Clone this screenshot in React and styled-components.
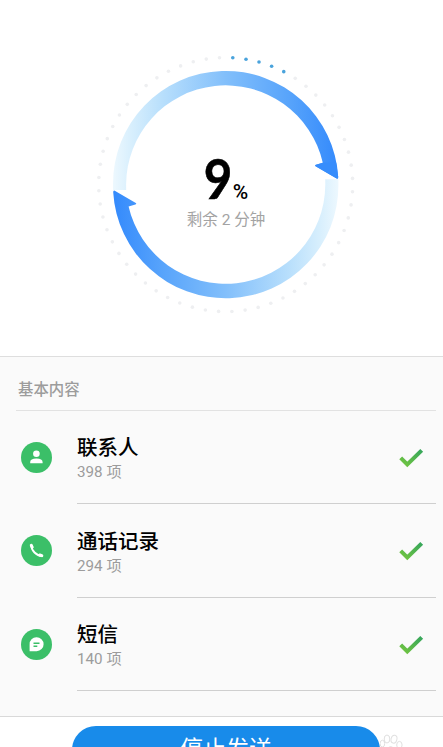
import React from 'react';
import styled, { createGlobalStyle } from 'styled-components';

const GlobalStyle = createGlobalStyle`
  * {
    box-sizing: border-box;
  }
  body {
    margin: 0;
    background: #fff;
    font-family: Roboto, "Noto Sans CJK SC", sans-serif;
  }
`;

const ScScreen = styled.div`
  height: 747px;
  overflow: hidden;
  display: flex;
  flex-direction: column;
  background: #fff;
`;

const ScProgress = styled.section`
  height: 356px;
  flex: none;
  padding: 50px 0 0 91px;
`;

const ScDial = styled.div`
  display: grid;
  width: 270px;
  height: 270px;

  & > * {
    grid-area: 1 / 1;
  }
`;

const ScDialText = styled.div`
  display: flex;
  flex-direction: column;
  align-items: center;
  padding-top: 100px;
`;

const ScPercent = styled.div`
  display: flex;
  align-items: baseline;
  height: 56px;
  line-height: 56px;
  color: #000;
`;

const ScNumber = styled.span`
  font-family: Lato, sans-serif;
  font-size: 56px;
  font-weight: 700;
  width: 28px;
  display: flex;
  justify-content: center;
  transform: scaleX(0.88);
  -webkit-text-stroke: 0.6px #000;
`;

const ScSign = styled.span`
  font-size: 21px;
  font-weight: 500;
  margin-left: 1px;
`;

const ScRemaining = styled.div`
  margin-top: 3px;
  font-size: 15.5px;
  line-height: 22px;
  color: #a3a3a3;
  white-space: nowrap;
`;

const ScPanel = styled.section`
  height: 361px;
  flex: none;
  background: #fafafa;
  border-top: 1px solid #dedede;
  border-bottom: 1px solid #d9d9d9;
`;

const ScPanelTitle = styled.h2`
  margin: 0 7px 0 16px;
  height: 53.5px;
  padding: 22px 0 0 2px;
  border-bottom: 1px solid #e2e2e2;
  font-size: 15.4px;
  line-height: 22px;
  font-weight: 500;
  color: #9c9c9c;
`;

const ScRow = styled.div`
  display: flex;
  height: 93.6px;
  padding: 0 7px 0 20.5px;
`;

const ScRowIcon = styled.div`
  width: 31px;
  height: 31px;
  margin: 31px 25.5px 0 0;
  flex: none;
  border-radius: 50%;
  background: #3bbf68;

  svg {
    display: block;
  }
`;

const ScRowBody = styled.div`
  flex: 1;
  display: flex;
  justify-content: space-between;
  border-bottom: 1px solid #cfcfcf;
  padding: 22.5px 12px 0 0;
`;

const ScRowTitle = styled.div`
  font-size: 20.5px;
  line-height: 30px;
  font-weight: 500;
  color: #000;
`;

const ScRowCount = styled.div`
  margin-top: -1px;
  font-size: 15.2px;
  line-height: 20px;
  color: #9c9c9c;
`;

const ScCheck = styled.svg`
  margin-top: 14.5px;
  flex: none;
`;

const ScFooter = styled.footer`
  display: flex;
  padding: 9px 0 0 72px;
`;

const ScStopButton = styled.button`
  width: 308px;
  height: 48px;
  flex: none;
  padding: 0;
  border: none;
  border-radius: 24px;
  background: #188bea;
  color: #fff;
  font-family: inherit;
  font-size: 23px;
  line-height: 44px;
`;

const ScPaw = styled.svg`
  flex: none;
  margin-top: 7px;
`;

const CENTER_X = 134.7;
const CENTER_Y = 134.6;

const dots = Array.from({ length: 60 }, (_, i) => {
  const angle = ((3.2 + i * 6) * Math.PI) / 180;
  return {
    x: CENTER_X + 127 * Math.sin(angle),
    y: CENTER_Y - 127 * Math.cos(angle),
    active: i < 5,
  };
});

// upper half of the ring, the lower one is the same shape turned by 180deg
const HALF_RING =
  'M22 134.6 A112.7 112.7 0 0 1 247.2 127 Q247.2 129.5 245.2 128.3 L224.6 116.2 Q223.4 115.2 225 114.8 L231.8 112.8 A99.6 99.6 0 0 0 35.1 134.6 L35.2 140 L22 140 Z';

const Dial = () => (
  <svg width="270" height="270" viewBox="0 0 270 270">
    <defs>
      <linearGradient id="ring" gradientUnits="userSpaceOnUse" x1="22" y1="0" x2="247" y2="0">
        <stop offset="0" stopColor="#edf8fe" />
        <stop offset="0.08" stopColor="#d8effd" />
        <stop offset="0.22" stopColor="#b8dffc" />
        <stop offset="0.5" stopColor="#82bffb" />
        <stop offset="0.78" stopColor="#58a4fb" />
        <stop offset="1" stopColor="#348afc" />
      </linearGradient>
    </defs>
    {dots.map((dot, i) => (
      <circle key={i} cx={dot.x} cy={dot.y} r="1.8" fill={dot.active ? '#4aa3dc' : '#eeeff1'} />
    ))}
    <path d={HALF_RING} fill="url(#ring)" />
    <path d={HALF_RING} fill="url(#ring)" transform={`rotate(180 ${CENTER_X} ${CENTER_Y})`} />
    <path d="M231.8 112.8 L225 114.8 Q223.4 115.2 224.6 116.2 L245.2 128.3 Q247.2 129.5 247.2 127 L245.2 112.8 Z" fill="#378dfc" />
  </svg>
);

const ContactIcon = () => (
  <svg width="31" height="31" viewBox="0 0 31 31" fill="#fff">
    <circle cx="15.4" cy="11.8" r="3.3" />
    <path d="M9.2 21.2 v-1.2 q0 -3.6 6.2 -3.6 t6.2 3.6 v1.2 z" />
  </svg>
);

const PhoneIcon = () => (
  <svg width="31" height="31" viewBox="0 0 31 31" fill="none" stroke="#fff" strokeLinecap="round">
    <path d="M10.4 10.2 C10.2 15.4 15.5 20.8 20.8 20.8" strokeWidth="2" />
    <path d="M10.3 10.4 L11.2 12.2 M18.8 20 L20.8 20.7" strokeWidth="3" />
  </svg>
);

const MessageIcon = () => (
  <svg width="31" height="31" viewBox="0 0 31 31">
    <path d="M8.6 22.2 V15.4 A7 7 0 1 1 15.6 22.2 Z" fill="#fff" />
    <path d="M12.5 14.2 h6 M12.5 17.2 h3.8" stroke="#3bbf68" strokeWidth="1.4" />
  </svg>
);

const Check = () => (
  <ScCheck width="26" height="20" viewBox="0 0 26 20" fill="none">
    <defs>
      <linearGradient id="check" x1="0" y1="1" x2="1" y2="0">
        <stop offset="0" stopColor="#72c540" />
        <stop offset="1" stopColor="#36a65b" />
      </linearGradient>
    </defs>
    <path d="M2.7 9.8 L9.3 16.5 L23.7 2.3" stroke="url(#check)" strokeWidth="4" />
  </ScCheck>
);

const items = [
  { id: 'contacts', title: '联系人', count: 398, Icon: ContactIcon },
  { id: 'calls', title: '通话记录', count: 294, Icon: PhoneIcon },
  { id: 'sms', title: '短信', count: 140, Icon: MessageIcon },
];

const TransferItem = ({ title, count, Icon }) => (
  <ScRow>
    <ScRowIcon>
      <Icon />
    </ScRowIcon>
    <ScRowBody>
      <div>
        <ScRowTitle>{title}</ScRowTitle>
        <ScRowCount>{count} 项</ScRowCount>
      </div>
      <Check />
    </ScRowBody>
  </ScRow>
);

const App = () => (
  <>
    <GlobalStyle />
    <ScScreen>
      <ScProgress>
        <ScDial>
          <Dial />
          <ScDialText>
            <ScPercent>
              <ScNumber>9</ScNumber>
              <ScSign>%</ScSign>
            </ScPercent>
            <ScRemaining>剩余 2 分钟</ScRemaining>
          </ScDialText>
        </ScDial>
      </ScProgress>
      <ScPanel>
        <ScPanelTitle>基本内容</ScPanelTitle>
        {items.map(item => (
          <TransferItem key={item.id} {...item} />
        ))}
      </ScPanel>
      <ScFooter>
        <ScStopButton>停止发送</ScStopButton>
        <ScPaw width="24" height="24" viewBox="0 0 24 24" fill="none" stroke="#e0e0e0">
          <ellipse cx="2.4" cy="10.6" rx="2.3" ry="3.4" />
          <ellipse cx="7" cy="6" rx="2.8" ry="4" />
          <ellipse cx="14" cy="6.2" rx="2.9" ry="4" transform="rotate(14 14 6.2)" />
          <ellipse cx="19.4" cy="12" rx="2.7" ry="3.6" />
          <path d="M4.5 19 Q10.5 8 17 19" />
        </ScPaw>
      </ScFooter>
    </ScScreen>
  </>
);

export default App;
